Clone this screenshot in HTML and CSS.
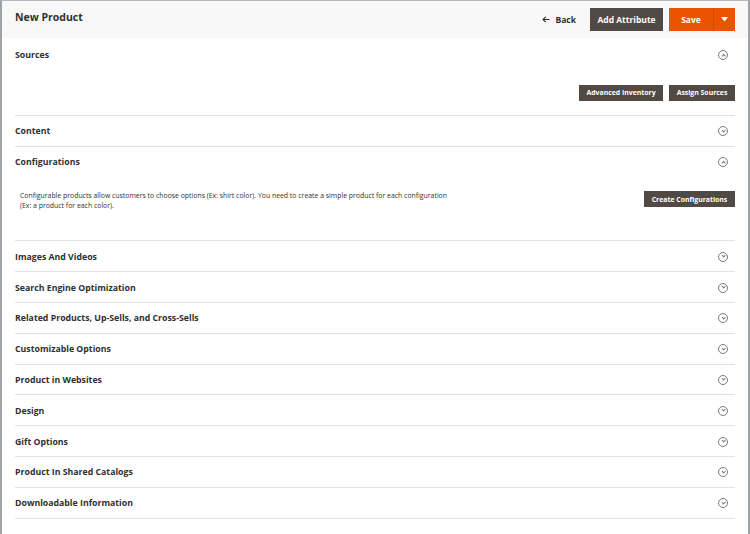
FILE: index.html
```html
<!DOCTYPE html>
<html>
<head>
<meta charset="utf-8">
<link rel="stylesheet" href="styles.css">
</head>
<body>
<div class="frame">
  <header class="topbar">
    <h1 class="title">New Product</h1>
    <div class="actions">
      <a class="back"><svg width="8" height="7" viewBox="0 0 8 7"><path d="M7.5 3.5H1.2M3.8 0.8L1 3.5L3.8 6.2" fill="none" stroke="#303030" stroke-width="1.1"/></svg><span>Back</span></a>
      <button class="btn btn-dark btn-lg">Add Attribute</button>
      <div class="save">
        <button class="save-main">Save</button>
        <button class="save-toggle"><svg width="7" height="5" viewBox="0 0 7 5"><path d="M0 0H7L3.5 4.5Z" fill="#fff"/></svg></button>
      </div>
    </div>
  </header>
  <main class="content">
    <section class="section open">
      <div class="sec-head first"><span class="sec-title">Sources</span><span class="ico up"></span></div>
      <div class="sec-body sources">
        <button class="btn btn-dark btn-sm btn-ai">Advanced Inventory</button>
        <button class="btn btn-dark btn-sm btn-as">Assign Sources</button>
      </div>
    </section>
    <section class="section">
      <div class="sec-head"><span class="sec-title">Content</span><span class="ico"></span></div>
    </section>
    <section class="section open">
      <div class="sec-head"><span class="sec-title">Configurations</span><span class="ico up"></span></div>
      <div class="sec-body config">
        <p class="note">Configurable products allow customers to choose options (Ex: shirt color). You need to create a simple product for each configuration<br>(Ex: a product for each color).</p>
        <button class="btn btn-dark btn-sm btn-cc">Create Configurations</button>
      </div>
    </section>
    <section class="section"><div class="sec-head"><span class="sec-title">Images And Videos</span><span class="ico"></span></div></section>
    <section class="section"><div class="sec-head"><span class="sec-title">Search Engine Optimization</span><span class="ico"></span></div></section>
    <section class="section"><div class="sec-head"><span class="sec-title">Related Products, Up-Sells, and Cross-Sells</span><span class="ico"></span></div></section>
    <section class="section"><div class="sec-head"><span class="sec-title">Customizable Options</span><span class="ico"></span></div></section>
    <section class="section"><div class="sec-head"><span class="sec-title">Product in Websites</span><span class="ico"></span></div></section>
    <section class="section"><div class="sec-head"><span class="sec-title">Design</span><span class="ico"></span></div></section>
    <section class="section"><div class="sec-head"><span class="sec-title">Gift Options</span><span class="ico"></span></div></section>
    <section class="section"><div class="sec-head"><span class="sec-title">Product In Shared Catalogs</span><span class="ico"></span></div></section>
    <section class="section"><div class="sec-head"><span class="sec-title">Downloadable Information</span><span class="ico"></span></div></section>
  </main>
</div>
</body>
</html>
```
FILE: styles.css
```css
html, body {
  margin: 0;
  padding: 0;
  background: #fff;
}
body {
  font-family: "Open Sans", "Liberation Sans", sans-serif;
  color: #303030;
}
.frame {
  width: 750px;
  height: 534px;
  box-sizing: border-box;
  border-left: 2px solid #9ea3a8;
  border-right: 2px solid #9ea3a8;
  border-top: 1px solid #b6babe;
  overflow: hidden;
}
.topbar {
  height: 37px;
  background: #f8f8f8;
  display: flex;
  align-items: center;
  justify-content: space-between;
  padding: 0 13px 0 13px;
}
.title {
  margin: 0;
  font-size: 10.5px;
  font-weight: 700;
  color: #303030;
  position: relative;
  top: -3px;
}
.actions {
  display: flex;
  align-items: center;
}
.back {
  display: flex;
  align-items: center;
  gap: 6px;
  font-size: 8.5px;
  font-weight: 700;
  color: #303030;
  margin-right: 14px;
}
.btn {
  font-family: "Open Sans", "Liberation Sans", sans-serif;
  border: none;
  color: #fff;
  font-weight: 700;
  padding: 0;
  cursor: pointer;
}
.btn-dark {
  background: #514943;
  border: 1px solid #514943;
  box-sizing: border-box;
}
.btn-lg {
  height: 23px;
  width: 73px;
  font-size: 8.5px;
}
.save {
  display: flex;
  margin-left: 6px;
  height: 23px;
}
.save-main, .save-toggle {
  background: #eb5202;
  border: none;
  color: #fff;
  font-family: "Open Sans", "Liberation Sans", sans-serif;
  font-weight: 700;
  font-size: 8.5px;
  padding: 0;
}
.save-main {
  width: 45px;
  border-right: 1px solid #d44a02;
  box-sizing: border-box;
}
.save-toggle {
  width: 21px;
  display: flex;
  align-items: center;
  justify-content: center;
}
.content {
  padding: 0 13px;
}
.section {
  border-bottom: 1px solid #e3e3e3;
}
.sec-head {
  height: 28.8px;
  padding-top: 1px;
  display: flex;
  align-items: center;
  justify-content: space-between;
}
.sec-head.first {
  padding-top: 3px;
}
.sec-title {
  font-size: 8.75px;
  font-weight: 700;
  color: #303030;
}
.ico {
  width: 10px;
  height: 10px;
  border: 1px solid #7a7a7a;
  border-radius: 50%;
  margin-right: 7px;
  position: relative;
  box-sizing: border-box;
}
.ico::after {
  content: "";
  position: absolute;
  left: 2.8px;
  top: 1.5px;
  width: 2.4px;
  height: 2.4px;
  border-right: 1px solid #7a7a7a;
  border-bottom: 1px solid #7a7a7a;
  transform: rotate(45deg);
}
.ico.up::after {
  top: 3px;
  transform: rotate(-135deg);
}
.sec-body.sources {
  display: flex;
  justify-content: flex-end;
  gap: 6px;
  padding: 15px 0 14px;
}
.btn-sm {
  height: 16px;
  font-size: 6.9px;
  padding: 0;
}
.btn-ai { width: 84px; }
.btn-as { width: 66px; }
.sec-body.config {
  display: flex;
  justify-content: space-between;
  align-items: flex-start;
  padding: 15px 0 29px 5px;
}
.note {
  margin: 0;
  font-size: 6.9px;
  line-height: 10px;
  color: #303030;
  padding-top: 0px;
}
.btn-cc {
  width: 91px;
  padding: 0;
}
```
